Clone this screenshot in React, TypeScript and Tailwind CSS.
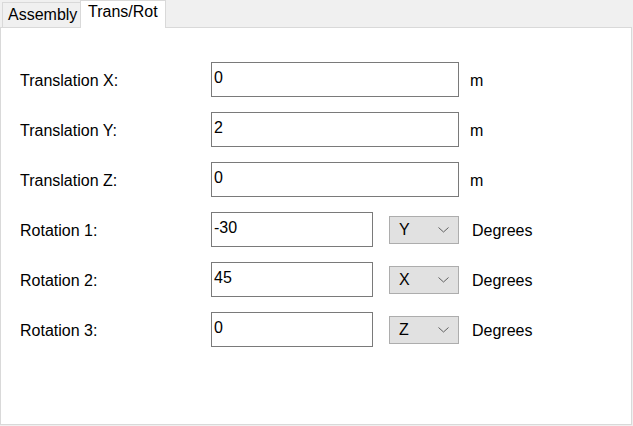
import React from "react";

interface TransRow {
  label: string;
  value: string;
}

interface RotRow {
  label: string;
  value: string;
  axis: string;
}

const translations: TransRow[] = [
  { label: "Translation X:", value: "0" },
  { label: "Translation Y:", value: "2" },
  { label: "Translation Z:", value: "0" },
];

const rotations: RotRow[] = [
  { label: "Rotation 1:", value: "-30", axis: "Y" },
  { label: "Rotation 2:", value: "45", axis: "X" },
  { label: "Rotation 3:", value: "0", axis: "Z" },
];

function Chevron() {
  return (
    <svg width="11" height="6" viewBox="0 0 11 6" className="shrink-0">
      <polyline points="0.5,0.5 5.5,5 10.5,0.5" fill="none" stroke="#606060" strokeWidth="1" />
    </svg>
  );
}

function TextBox({ value, width }: { value: string; width: string }) {
  return (
    <div className={`${width} h-[35px] border border-[#7a7a7a] bg-white pl-[2px] pt-[6px] leading-[18px] text-black`}>
      {value}
    </div>
  );
}

export default function App() {
  return (
    <div
      className="w-[633px] h-[426px] bg-[#f0f0f0] text-[16px] text-black"
      style={{ fontFamily: '"Liberation Sans", Arial, sans-serif' }}
    >
      {/* Tabs */}
      <div className="flex items-end h-[27px] pl-[2px]">
        <div className="h-[25px] w-[79px] border border-b-0 border-[#d9d9d9] bg-[#f0f0f0] pl-[5px] pt-[3px] leading-[18px]">
          Assembly
        </div>
        <div className="relative z-10 -ml-px h-[28px] -mb-px w-[86px] border border-b-0 border-[#d9d9d9] bg-white pl-[7px] pt-[2px] leading-[18px] self-start">
          Trans/Rot
        </div>
      </div>

      {/* Panel */}
      <div className="w-[632px] h-[398px] border border-[#d9d9d9] bg-white pl-[19px] pt-[34px] flex flex-col gap-[15px]">
        {translations.map((r) => (
          <div key={r.label} className="flex items-center h-[35px]">
            <div className="w-[191px] pt-[2px] leading-[18px]">{r.label}</div>
            <TextBox value={r.value} width="w-[248px]" />
            <div className="ml-[11px] pt-[2px] leading-[18px]">m</div>
          </div>
        ))}
        {rotations.map((r) => (
          <div key={r.label} className="flex items-center h-[35px]">
            <div className="w-[191px] pt-[2px] leading-[18px]">{r.label}</div>
            <TextBox value={r.value} width="w-[162px]" />
            <div className="ml-[16px] w-[70px] h-[28px] border border-[#adadad] bg-[#e1e1e1] flex items-center justify-between pl-[9px] pr-[9px] leading-[18px]">
              <span>{r.axis}</span>
              <Chevron />
            </div>
            <div className="ml-[13px] pt-[2px] leading-[18px]">Degrees</div>
          </div>
        ))}
      </div>
    </div>
  );
}
